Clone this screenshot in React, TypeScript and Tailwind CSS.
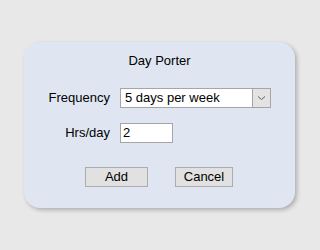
const font = { fontFamily: '"Liberation Sans", Arial, sans-serif' };

const Field = ({ label, children }: any) => (
	<div className="flex items-center">
		<span className="w-[86px] pr-0 text-right text-[13px] text-black">{label}</span>
		<div className="ml-[10px]">{children}</div>
	</div>
);

export default function App() {
	return (
		<div
			className="h-[250px] w-[320px] bg-[#e8e8e8] pl-[24px] pt-[42px]"
			style={font}
		>
			<div className="h-[166px] w-[271px] rounded-[16px] bg-[#dfe6f1] pt-[11px] shadow-[2px_2px_4px_rgba(0,0,0,0.25)]">
				<div className="text-center text-[13px] leading-[16px] text-black">Day Porter</div>

				<div className="mt-[19px]">
					<Field label="Frequency">
						<div className="flex h-[20px] w-[151px] items-center border border-[#a5a5a5] bg-white">
							<span className="flex-1 pl-[4px] text-[13px] leading-[18px] text-black">5 days per week</span>
							<div className="flex h-[18px] w-[18px] items-center justify-center border-l border-[#a5a5a5] bg-[#e3e3e3]">
								<svg width="9" height="6" viewBox="0 0 9 6">
									<path d="M1 1.5 L4.5 4.5 L8 1.5" fill="none" stroke="#606060" strokeWidth="1" />
								</svg>
							</div>
						</div>
					</Field>
				</div>

				<div className="mt-[15px]">
					<Field label="Hrs/day">
						<div className="flex h-[20px] w-[53px] items-center border border-[#a5a5a5] bg-white pl-[2px] text-[13px] text-black">
							2
						</div>
					</Field>
				</div>

				<div className="mt-[24px] flex pl-[61px]">
					<button className="h-[20px] w-[63px] border border-[#adadad] bg-[#e1e1e1] text-[13px] leading-[18px] text-black">
						Add
					</button>
					<button className="ml-[27px] h-[20px] w-[58px] border border-[#adadad] bg-[#e1e1e1] text-[13px] leading-[18px] text-black">
						Cancel
					</button>
				</div>
			</div>
		</div>
	);
}
